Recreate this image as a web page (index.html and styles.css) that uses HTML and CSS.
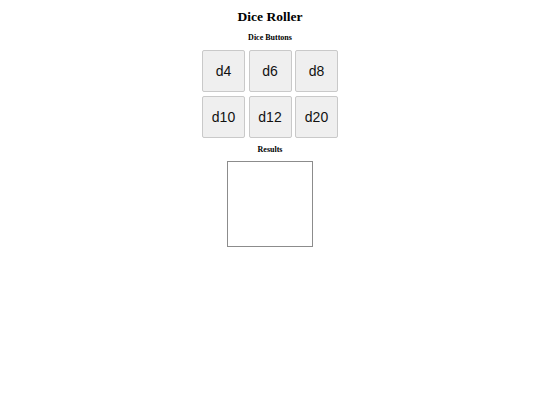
FILE: index.html
```html
<!DOCTYPE html>
<html lang="en">
<head>
  <meta charset="UTF-8" />
  <title>Dice Roller</title>
  <link rel="stylesheet" href="styles.css">
</head>
<body>
  <div class="app">
    <h1 class="title">Dice Roller</h1>

    <h4 class="section-title">Dice Buttons</h4>
    <div class="dice-grid">
      <button class="die" data-sides="4">d4</button>
      <button class="die" data-sides="6">d6</button>
      <button class="die" data-sides="8">d8</button>
      <button class="die" data-sides="10">d10</button>
      <button class="die" data-sides="12">d12</button>
      <button class="die" data-sides="20">d20</button>
    </div>

    <h4 class="section-title results-title">Results</h4>
    <div class="results" id="results"></div>
  </div>

  <script>
    const results = document.getElementById("results");

    document.querySelectorAll(".die").forEach((btn) => {
      btn.addEventListener("click", () => {
        const sides = Number(btn.dataset.sides);
        const roll = Math.floor(Math.random() * sides) + 1;
        const line = document.createElement("div");
        line.textContent = "d" + sides + ": " + roll;
        results.prepend(line);
      });
    });
  </script>
</body>
</html>
```

FILE: styles.css
```css
body {
  margin: 0;
  font-family: "Liberation Serif", "Times New Roman", serif;
  background: #fff;
  color: #000;
}
.app {
  display: flex;
  flex-direction: column;
  align-items: center;
  padding-top: 9px;
}
.title {
  margin: 0;
  font-size: 13.5px;
  line-height: 16px;
  font-weight: bold;
}
.section-title {
  margin: 8px 0 0;
  font-size: 8px;
  line-height: 10px;
  font-weight: bold;
}
.results-title {
  margin-top: 7px;
}
.dice-grid {
  display: grid;
  grid-template-columns: repeat(3, 43px);
  grid-auto-rows: 42px;
  column-gap: 3.5px;
  row-gap: 4px;
  margin-top: 7px;
}
.die {
  margin: 0;
  padding: 0;
  font-family: "Liberation Sans", Arial, sans-serif;
  font-size: 14px;
  color: #111;
  background-color: #efefef;
  border: 1px solid #c9c9c9;
  border-radius: 2px;
  cursor: pointer;
}
.die:hover {
  background-color: #e5e5e5;
}
.results {
  box-sizing: border-box;
  width: 86px;
  height: 86px;
  margin-top: 6px;
  border: 1px solid #8c8c8c;
  font-family: "Liberation Sans", Arial, sans-serif;
  font-size: 10px;
  overflow-y: auto;
}
```
